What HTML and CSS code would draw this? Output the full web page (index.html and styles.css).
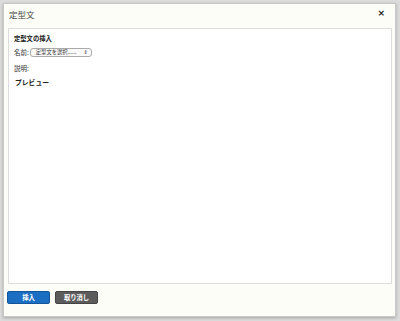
FILE: index.html
```html
<!DOCTYPE html>
<html lang="ja">
<head>
    <meta charset="UTF-8">
    <title>定型文</title>
    <link rel="stylesheet" href="styles.css">
</head>
<body>
    <div class="dialog">
        <div class="dialog-title">
            <span class="title-text">定型文</span>
            <span class="close-button">×</span>
        </div>
        <div class="dialog-body">
            <div class="section-title">定型文の挿入</div>
            <div class="field-row">
                <span class="field-label">名前:</span>
                <span class="select-box">定型文を選択...... <span class="select-arrow">⇕</span></span>
            </div>
            <div class="field-row desc">
                <span class="field-label">説明:</span>
            </div>
            <div class="preview-title">プレビュー</div>
        </div>
        <div class="dialog-buttons">
            <button class="btn btn-primary">挿入</button>
            <button class="btn btn-cancel">取り消し</button>
        </div>
    </div>
</body>
</html>
```

FILE: styles.css
```css
body {
    margin: 0;
    padding: 3px 0 0 3px;
    height: 321px;
    box-sizing: border-box;
    background-color: #dcdcdc;
    font-family: "Noto Sans CJK JP", "Liberation Sans", sans-serif;
    color: #333;
    overflow: hidden;
}

.dialog {
    width: 393px;
    height: 314px;
    box-sizing: border-box;
    background-color: #fdfdf8;
    border: 1px solid #c8c8c8;
    box-shadow: 0 1px 3px rgba(0, 0, 0, 0.25);
    display: flex;
    flex-direction: column;
}

.dialog-title {
    height: 24px;
    display: flex;
    align-items: center;
    justify-content: space-between;
    padding: 0 10px 5px 5px;
    box-sizing: border-box;
}

.title-text {
    font-size: 8.5px;
    color: #444;
}

.close-button {
    font-family: "DejaVu Sans", sans-serif;
    font-size: 9px;
    font-weight: bold;
    color: #222;
    margin-bottom: 2px;
}

.dialog-body {
    margin: 0 3px 0 4px;
    height: 256px;
    box-sizing: border-box;
    background-color: #fff;
    border: 1px solid #dcdcdc;
    padding: 5px 5px;
}

.section-title {
    font-size: 6.3px;
    font-weight: bold;
    color: #222;
    line-height: 9px;
}

.field-row {
    display: flex;
    align-items: center;
    margin-top: 4px;
    height: 10px;
}

.field-row.desc {
    margin-top: 6px;
}

.field-label {
    font-size: 6.5px;
    color: #333;
    margin-right: 1px;
}

.select-box {
    width: 62px;
    height: 9px;
    box-sizing: border-box;
    border: 1px solid #aaa;
    border-radius: 3px;
    font-size: 5.3px;
    line-height: 7px;
    padding: 0 3px 0 5px;
    color: #333;
    display: flex;
    justify-content: space-between;
    background-color: #fafafa;
}

.select-arrow {
    font-family: "DejaVu Sans", sans-serif;
    font-size: 5px;
}

.preview-title {
    margin-top: 4px;
    font-size: 6.8px;
    font-weight: bold;
    color: #222;
    padding-left: 1px;
}

.dialog-buttons {
    display: flex;
    gap: 5px;
    padding: 7px 0 0 3px;
}

.btn {
    width: 43px;
    height: 13px;
    box-sizing: border-box;
    border-radius: 2px;
    font-family: "Noto Sans CJK JP", sans-serif;
    font-size: 6.3px;
    font-weight: bold;
    color: #fff;
    padding: 0;
    line-height: 11px;
}

.btn-primary {
    background-color: #1b6ec2;
    border: 1px solid #14569a;
}

.btn-cancel {
    background-color: #5c5c5c;
    border: 1px solid #444;
}
```
